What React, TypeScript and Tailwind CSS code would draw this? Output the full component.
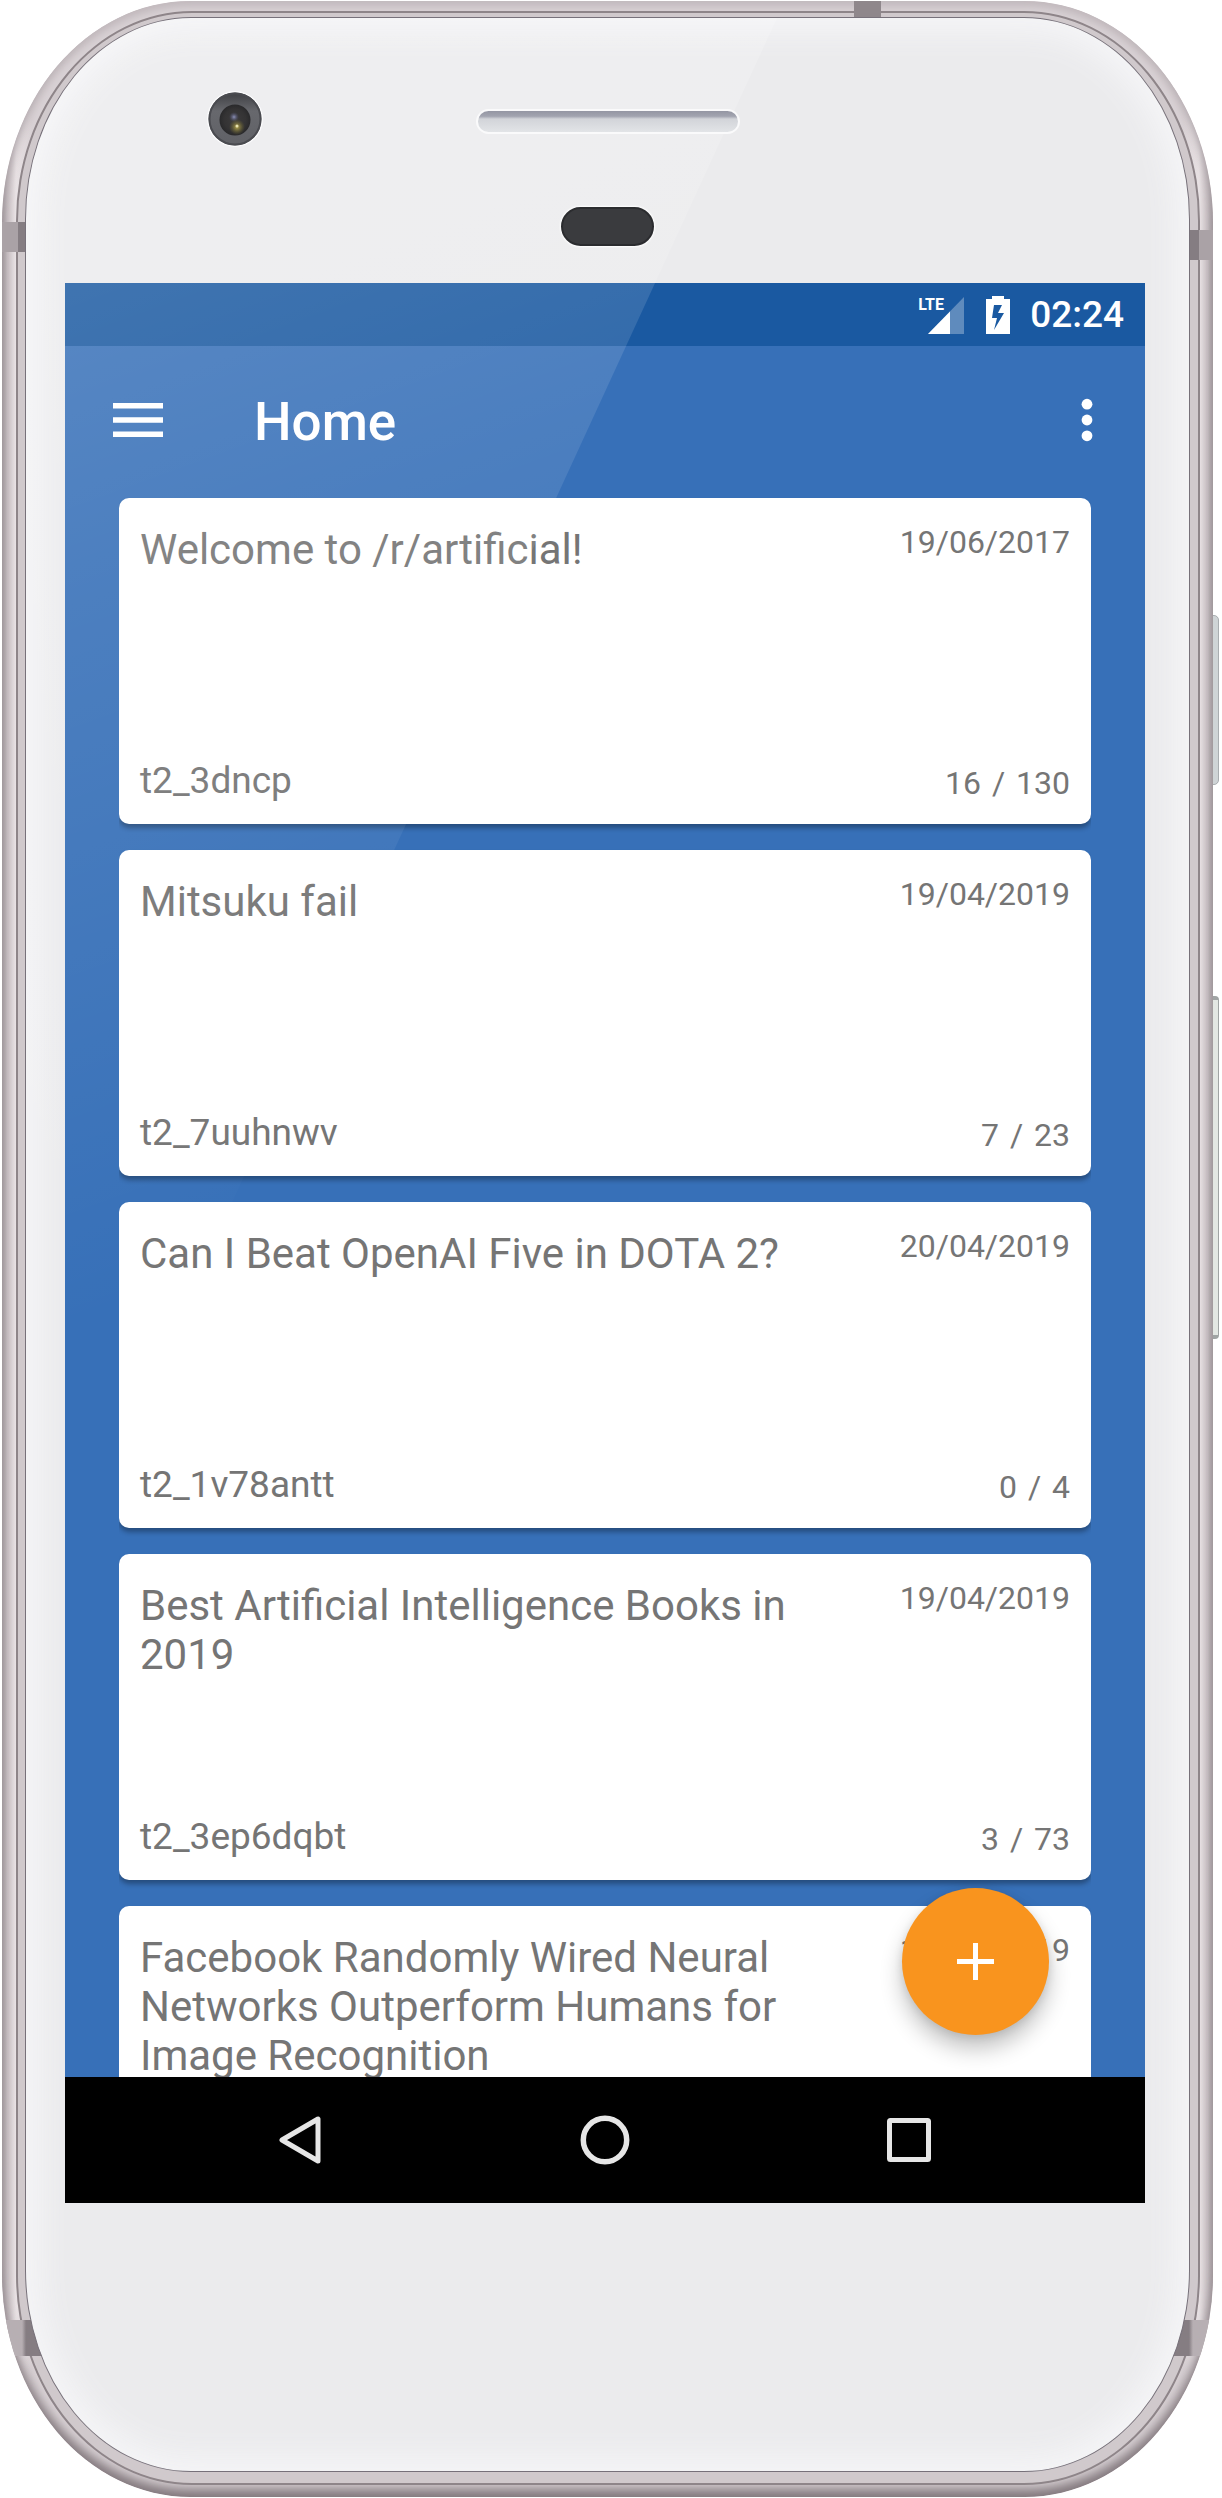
type Post = {
  title: string;
  date: string;
  author?: string;
  score?: string;
  comments?: string;
};

const posts: Post[] = [
  { title: "Welcome to /r/artificial!", date: "19/06/2017", author: "t2_3dncp", score: "16", comments: "130" },
  { title: "Mitsuku fail", date: "19/04/2019", author: "t2_7uuhnwv", score: "7", comments: "23" },
  { title: "Can I Beat OpenAI Five in DOTA 2?", date: "20/04/2019", author: "t2_1v78antt", score: "0", comments: "4" },
  {
    title: "Best Artificial Intelligence Books in 2019",
    date: "19/04/2019",
    author: "t2_3ep6dqbt",
    score: "3",
    comments: "73",
  },
  { title: "Facebook Randomly Wired Neural Networks Outperform Humans for Image Recognition", date: "19/04/2019" },
];

function PostCard({ post }: { post: Post }) {
  return (
    <article className="flex min-h-[326px] shrink-0 flex-col justify-between rounded-[10px] bg-white px-[21px] pt-[25px] pb-[22px] text-[#757575] shadow-[0_4px_5px_rgba(0,0,0,0.32)]">
      <div className="flex items-start gap-8">
        <h2 className="min-w-0 flex-1 pt-[2px] text-[42px] leading-[49px]">{post.title}</h2>
        <time className="text-[32px] leading-[38px]">{post.date}</time>
      </div>
      {post.author && (
        <div className="flex items-end justify-between">
          <span className="text-[37px] leading-[43px]">{post.author}</span>
          <span className="text-[32px] leading-[38px] whitespace-nowrap">
            {post.score} <span className="mx-[3px]">/</span> {post.comments}
          </span>
        </div>
      )}
    </article>
  );
}

function StatusBar() {
  return (
    <div className="flex h-[63px] shrink-0 items-center justify-end bg-[#1a59a1] pr-[21px] text-white">
      <div className="relative mr-[22px] h-[38px] w-[46px]">
        <svg viewBox="0 0 46 38" className="h-full w-full" aria-hidden="true">
          <path d="M46 1V38H10Z" fill="#fff" opacity="0.3" />
          <path d="M32 15.500V38H10Z" fill="#fff" />
        </svg>
        <span className="absolute top-0 left-0 text-[16px] leading-[18px] font-bold">LTE</span>
      </div>
      <svg viewBox="0 0 24 38" className="mr-[20px] h-[38px] w-[24px]" aria-hidden="true">
        <path
          fillRule="evenodd"
          fill="#fff"
          d="M6 0H18V3H24V38H0V3H6ZM8 9L6 22H11L8 34L18 17H12L16 9Z"
        />
      </svg>
      <span className="text-[37px] leading-[43px] font-medium">02:24</span>
    </div>
  );
}

function AppBar() {
  return (
    <header className="flex h-[147px] shrink-0 items-center pr-[43px] pl-[48px] text-white">
      <button type="button" aria-label="Open menu" className="flex h-[72px] items-center">
        <svg viewBox="0 0 50 34" className="h-[34px] w-[50px]" fill="#fff" aria-hidden="true">
          <path d="M0 0H50V5.500H0ZM0 14.200H50V19.700H0ZM0 28.500H50V34H0Z" />
        </svg>
      </button>
      <h1 className="flex-1 pt-1 pl-[91px] text-[53px] leading-[62px] font-medium">Home</h1>
      <button type="button" aria-label="More options" className="flex h-[72px] w-[30px] items-center justify-center">
        <svg viewBox="0 0 12 44" className="h-[44px] w-[12px]" fill="#fff" aria-hidden="true">
          <circle cx="6" cy="6.200" r="5.400" />
          <circle cx="6" cy="22" r="5.400" />
          <circle cx="6" cy="37.800" r="5.400" />
        </svg>
      </button>
    </header>
  );
}

function NavBar() {
  return (
    <nav aria-label="System" className="flex h-[126px] shrink-0 justify-center gap-[2px] bg-black">
      <button type="button" aria-label="Back" className="flex w-[28%] items-center justify-center">
        <svg viewBox="0 0 44 50" className="h-[50px] w-[44px]" fill="none" stroke="#e6e6e6" strokeWidth="5" strokeLinejoin="round" aria-hidden="true">
          <path d="M39 4V46L3 25Z" />
        </svg>
      </button>
      <button type="button" aria-label="Home screen" className="flex w-[28%] items-center justify-center">
        <svg viewBox="0 0 50 50" className="h-[50px] w-[50px]" fill="none" stroke="#e6e6e6" strokeWidth="5.500" aria-hidden="true">
          <circle cx="25" cy="25" r="21.700" />
        </svg>
      </button>
      <button type="button" aria-label="Recent apps" className="flex w-[28%] items-center justify-center">
        <svg viewBox="0 0 44 44" className="h-[44px] w-[44px]" fill="none" stroke="#e6e6e6" strokeWidth="5" strokeLinejoin="round" aria-hidden="true">
          <rect x="2.500" y="2.500" width="39" height="39" rx="1" />
        </svg>
      </button>
    </nav>
  );
}

function Screen() {
  return (
    <main className="relative flex aspect-[9/16] flex-col overflow-hidden bg-[#3770b8]">
      <StatusBar />
      <AppBar />
      <div className="relative min-h-0 flex-1">
        <div className="mx-[54px] flex h-full flex-col gap-[26px] overflow-hidden pt-[5px]">
          {posts.map((post) => (
            <PostCard key={post.title} post={post} />
          ))}
        </div>
        <button
          type="button"
          aria-label="Add post"
          className="absolute right-[96px] bottom-[42px] flex size-[147px] items-center justify-center rounded-full bg-[#f9941e] shadow-[0_14px_22px_rgba(0,0,0,0.24),0_2px_8px_rgba(0,0,0,0.1)]"
        >
          <svg viewBox="0 0 37 37" className="size-[37px]" stroke="#fff" strokeWidth="5" aria-hidden="true">
            <path d="M18.500 0V37M0 18.500H37" />
          </svg>
        </button>
      </div>
      <NavBar />
    </main>
  );
}

function Camera() {
  return (
    <svg viewBox="0 0 56 56" className="size-[56px]" aria-hidden="true">
      <defs>
        <linearGradient id="cam-ring" x1="0" y1="0" x2="0" y2="1">
          <stop offset="0" stopColor="#3e3f43" />
          <stop offset="0.35" stopColor="#67686d" />
          <stop offset="1" stopColor="#606166" />
        </linearGradient>
        <radialGradient id="cam-lens">
          <stop offset="0" stopColor="#3c3b3c" />
          <stop offset="0.7" stopColor="#343334" />
          <stop offset="1" stopColor="#29292b" />
        </radialGradient>
        <radialGradient id="cam-gold">
          <stop offset="0" stopColor="#b7a94f" />
          <stop offset="1" stopColor="#6b6430" stopOpacity="0" />
        </radialGradient>
        <radialGradient id="cam-blue">
          <stop offset="0" stopColor="#8d92b8" />
          <stop offset="1" stopColor="#4d4f70" stopOpacity="0" />
        </radialGradient>
      </defs>
      <circle cx="28" cy="28" r="28" fill="#fbfbfc" />
      <circle cx="28" cy="28" r="26.500" fill="url(#cam-ring)" />
      <circle cx="28" cy="28" r="25.500" fill="none" stroke="#4a4b50" strokeWidth="2" />
      <circle cx="28" cy="29" r="15.500" fill="url(#cam-lens)" />
      <circle cx="27" cy="26" r="5" fill="url(#cam-blue)" />
      <circle cx="30" cy="36" r="8" fill="url(#cam-gold)" />
      <circle cx="30" cy="35" r="1.500" fill="#e8e3b0" />
    </svg>
  );
}

function Bezel() {
  return (
    <div className="relative z-10 grid h-[265px] grid-cols-[1fr_auto_1fr] items-start pt-[73px]">
      <div className="pl-[142px]">
        <Camera />
      </div>
      <div className="flex flex-col items-center pt-[18px] pl-[5px]">
        <div className="h-[25px] w-[264px] rounded-full border-2 border-[#fafafb] bg-[linear-gradient(180deg,#9496a3_0%,#a2a4b0_25%,#d2d4d9_38%,#e2e4e7_100%)]" />
        <div className="mt-[73px] h-[39px] w-[93px] rounded-full border-2 border-[#2b2c2f] bg-[#3a3b3e] shadow-[0_0_2px_1px_#ffffff]" />
      </div>
    </div>
  );
}

export default function App() {
  return (
    <div className="w-full bg-white font-['Roboto',sans-serif]">
      <div className="relative mr-[9px] ml-[2px] pt-px pb-px">
        <div className="absolute top-[615px] -right-[6px] h-[170px] w-[8px] rounded-r-[5px] border border-[#a9adb0] bg-[#cfd4d6]" />
        <div className="absolute top-[996px] -right-[6px] h-[343px] w-[8px] rounded-r-[4px] border border-y-4 border-[#a0a4a4] bg-[#e3e7e3]" />
        <div className="relative overflow-hidden rounded-[188px/222px] bg-[linear-gradient(90deg,#aaa2a6_0px,#cdc5c8_5px,#e9e3e5_14px,#d9d2d5_30px,#d9d2d5_calc(100%-30px),#e9e3e5_calc(100%-14px),#cdc5c8_calc(100%-5px),#aaa2a6_100%)] pt-[16px] pr-[23px] pb-[25px] pl-[23px]">
          <div className="absolute inset-0 rounded-[188px/222px] shadow-[inset_0_-10px_12px_-2px_#82787d,inset_0_6px_8px_-2px_#c4bcc0,inset_0_0_12px_0px_#b3aaae]" />
          <div className="absolute top-[10px] right-[13px] bottom-[12px] left-[14px] rounded-[176px/210px] border-2 border-[#8e8589] bg-[#d0c9cc]" />
          <div className="absolute top-[221px] left-0 h-[30px] w-[40px] bg-[linear-gradient(90deg,#aaa2a6_16px,#857d82_16px)]" />
          <div className="absolute top-[229px] right-0 h-[30px] w-[40px] bg-[linear-gradient(270deg,#aaa2a6_14px,#857d82_14px)]" />
          <div className="absolute bottom-[141px] left-0 h-[36px] w-[60px] bg-[linear-gradient(90deg,#b7afb3_20px,#857d82_24px)]" />
          <div className="absolute right-0 bottom-[141px] h-[36px] w-[60px] bg-[linear-gradient(270deg,#b7afb3_20px,#857d82_24px)]" />
          <div className="absolute top-0 left-[70%] ml-[4px] h-[30px] w-[27px] bg-[#8f878b]" />
          <div className="relative overflow-hidden rounded-[166px/202px] border border-[#77717a] bg-[#ebebed] pr-[44px] pb-[268px] pl-[39px] shadow-[inset_0_0_30px_14px_#f5f5f7]">
            <Bezel />
            <Screen />
            <div className="pointer-events-none absolute inset-0 bg-[linear-gradient(160deg,rgba(255,255,255,0.165)_260px,rgba(255,255,255,0.105)_560px,rgba(255,255,255,0.055)_900px,rgba(255,255,255,0)_1250px)] [clip-path:polygon(0_0,751px_0,0_1632px)]" />
          </div>
        </div>
      </div>
    </div>
  );
}
